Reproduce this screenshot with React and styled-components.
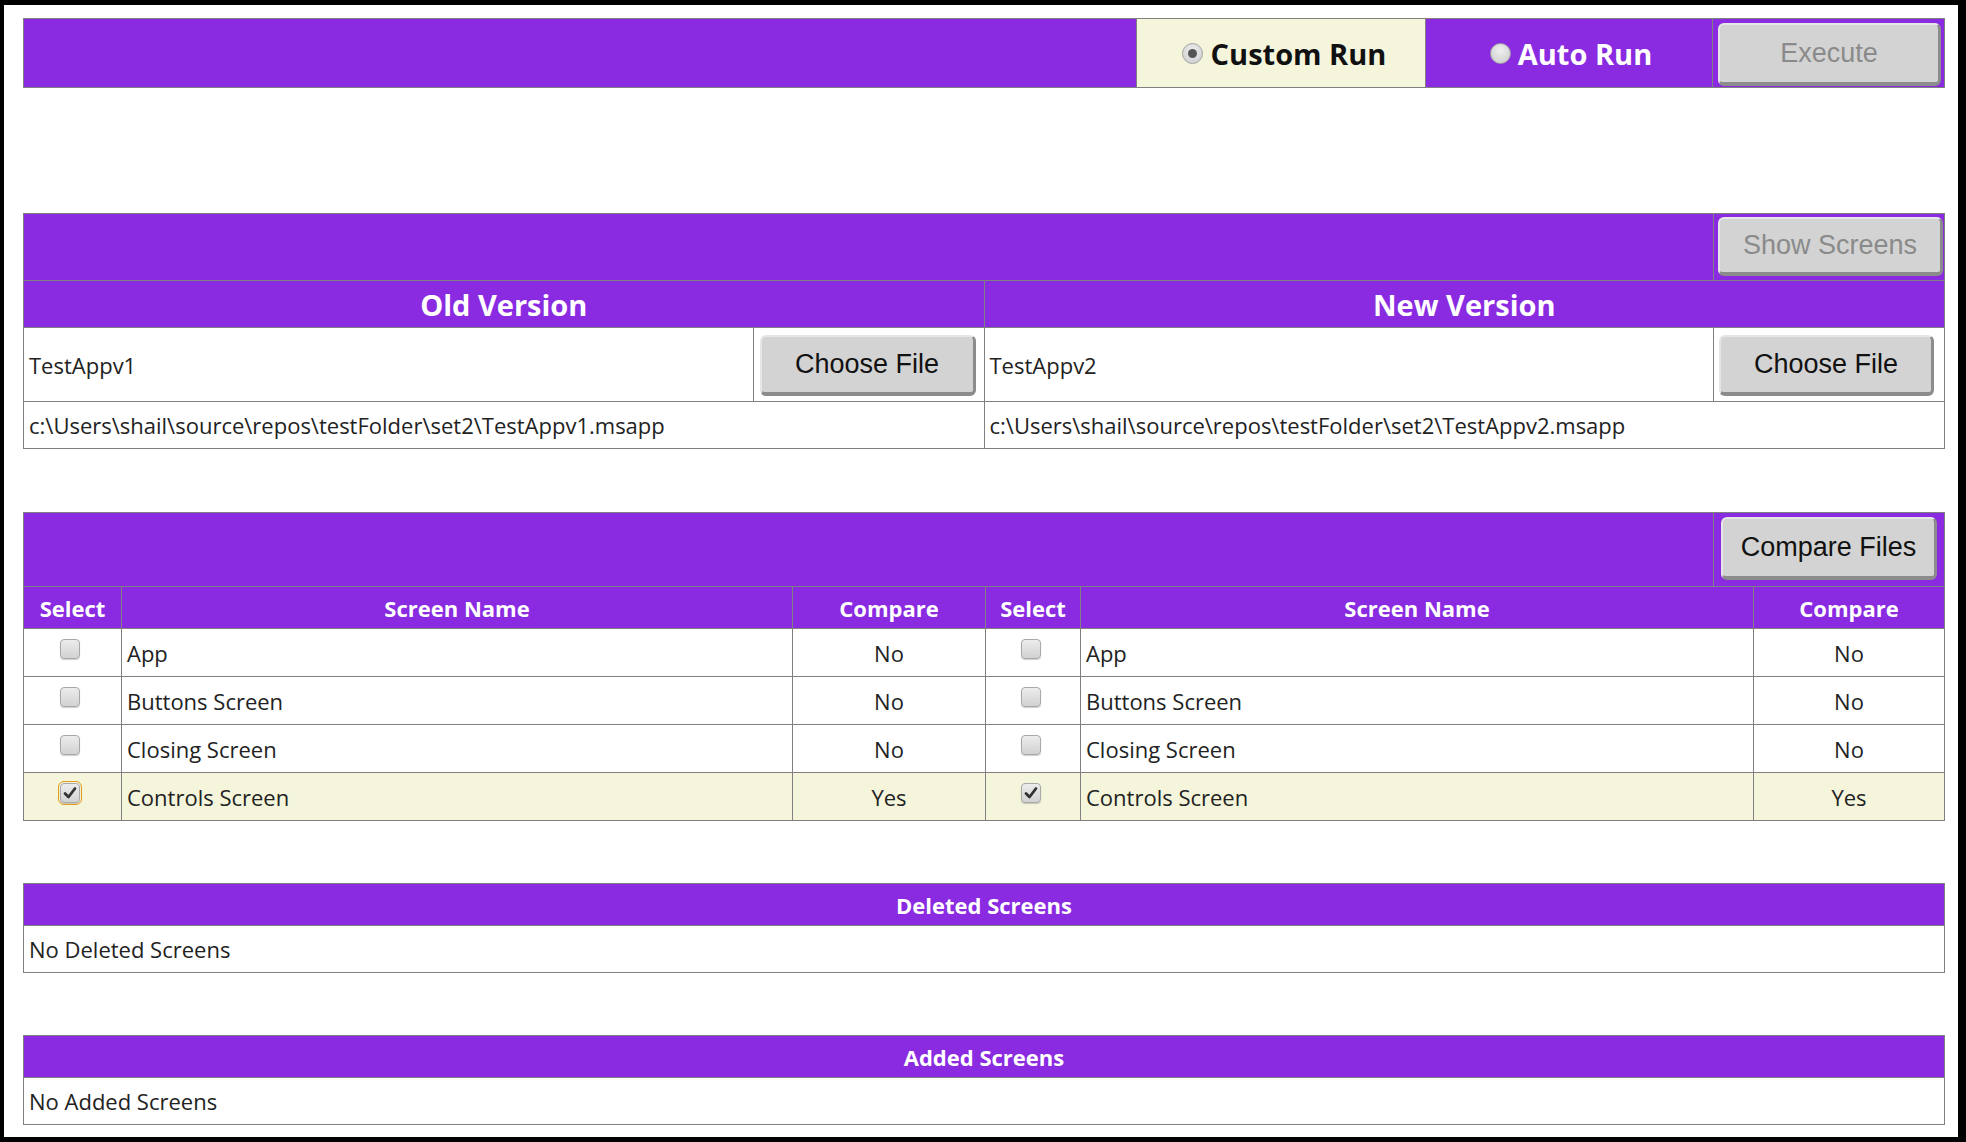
import React, { useState } from 'react';
import styled, { createGlobalStyle } from 'styled-components';

const purple = '#8a2be2';
const line = '#808080';
const beige = '#f5f5dc';

const GlobalStyle = createGlobalStyle`
  html, body {
    margin: 0;
    padding: 0;
    background: #fff;
  }
  * {
    box-sizing: border-box;
  }
`;

const Frame = styled.div`
  width: 1966px;
  height: 1142px;
  border-style: solid;
  border-color: #000;
  border-width: 5px 8px 5px 4px;
  padding: 13px 13px 0 19px;
  font-family: "Open Sans", "Noto Sans", sans-serif;
  color: #222;
  overflow: hidden;
`;

const Panel = styled.div`
  border: 1px solid ${line};
  margin-top: ${p => p.$gap || 0}px;
`;

const Row = styled.div`
  display: grid;
  grid-template-columns: ${p => p.$cols || '1fr'};
  column-gap: 1px;
  background: ${line};
  height: ${p => p.$h}px;
  & + & {
    box-sizing: content-box;
    border-top: 1px solid ${line};
  }
`;

const Cell = styled.div`
  display: flex;
  align-items: ${p => p.$top ? 'flex-start' : 'center'};
  justify-content: ${p => p.$center ? 'center' : 'flex-start'};
  background: ${p => p.$bg || '#fff'};
  padding: ${p => p.$top ? '10px 5px 0 0' : '0 5px'};
  font-size: 22px;
  min-width: 0;
  white-space: nowrap;
`;

const HeadCell = styled.div`
  display: flex;
  align-items: center;
  justify-content: center;
  background: ${p => p.$bg || purple};
  color: ${p => p.$dark ? '#111' : '#fff'};
  font-weight: 700;
  font-size: ${p => p.$big ? 29 : 22}px;
  gap: ${p => p.$gap || 0}px;
  padding-left: ${p => p.$shift || 0}px;
  white-space: nowrap;
  cursor: ${p => p.onClick ? 'pointer' : 'default'};
`;

const ButtonCell = styled.div`
  display: flex;
  background: ${p => p.$white ? '#fff' : purple};
  padding: ${p => p.$pad};
`;

const Button = styled.button`
  flex: 1;
  font-family: "Liberation Sans", Arial, sans-serif;
  font-size: 27px;
  color: ${p => p.$disabled ? '#8a8a8a' : '#111'};
  background: #d3d3d3;
  border-style: solid;
  border-width: 2px 3px 4px 2px;
  border-color: #e6e6e6 #8c8c8c #8c8c8c #e6e6e6;
  border-radius: 6px;
  padding: 0;
  cursor: pointer;
`;

const Radio = styled.span`
  width: 21px;
  height: 21px;
  border-radius: 50%;
  border: 1px solid #a3a3a3;
  background: radial-gradient(circle at 50% 35%, #f0f0f0, #c9c9c9);
  display: flex;
  align-items: center;
  justify-content: center;
  &::after {
    content: '';
    width: 9px;
    height: 9px;
    border-radius: 50%;
    background: ${p => p.$checked ? '#555' : 'transparent'};
  }
`;

const Box = styled.span`
  width: 20px;
  height: 20px;
  border-radius: 4px;
  border: 1px solid #a8a8a8;
  background: linear-gradient(#ececec, #d2d2d2);
  box-shadow: 0 1px 1px rgba(0, 0, 0, 0.2);
  display: flex;
  align-items: center;
  justify-content: center;
  outline: ${p => p.$focus ? '1px solid #e39b1b' : 'none'};
  outline-offset: 1px;
  cursor: pointer;
`;

const Check = ({ checked, focus, onClick }) => (
  <Box $focus={focus} onClick={onClick}>
    {checked &&
      <svg width="14" height="14" viewBox="0 0 14 14">
        <path d="M2 7.5 L5.5 11 L12 2.5" fill="none" stroke="#333" strokeWidth="2.8" strokeLinecap="round" strokeLinejoin="round" />
      </svg>}
  </Box>
);

const screens = [
  { name: 'App', compare: 'No' },
  { name: 'Buttons Screen', compare: 'No' },
  { name: 'Closing Screen', compare: 'No' },
  { name: 'Controls Screen', compare: 'Yes' },
];

const tableCols = '97px 670px 192px 94px 672px 1fr';

function App() {
  const [mode, setMode] = useState('custom');
  const [picked, setPicked] = useState([false, false, false, true]);

  const toggle = idx => {
    setPicked(picked.map((v, i) => i === idx ? !v : v));
  };

  return (
    <Frame>
      <GlobalStyle />
      <Panel>
        <Row $h={68} $cols="1fr 288px 286px 231px">
          <HeadCell />
          <HeadCell $big $gap={8} $shift={6} $bg={mode === 'custom' ? beige : purple} $dark={mode === 'custom'}
            onClick={() => setMode('custom')}>
            <Radio $checked={mode === 'custom'} />Custom Run
          </HeadCell>
          <HeadCell $big $gap={7} $shift={4} $bg={mode === 'auto' ? beige : purple} $dark={mode === 'auto'}
            onClick={() => setMode('auto')}>
            <Radio $checked={mode === 'auto'} />Auto Run
          </HeadCell>
          <ButtonCell $pad="4px 3px 1px 5px">
            <Button $disabled>Execute</Button>
          </ButtonCell>
        </Row>
      </Panel>

      <Panel $gap={125}>
        <Row $h={66} $cols="1fr 230px">
          <HeadCell />
          <ButtonCell $pad="3px 1px 4px 4px">
            <Button $disabled>Show Screens</Button>
          </ButtonCell>
        </Row>
        <Row $h={46} $cols="1fr 1fr">
          <HeadCell $big>Old Version</HeadCell>
          <HeadCell $big>New Version</HeadCell>
        </Row>
        <Row $h={73} $cols="1fr 230px 1fr 230px">
          <Cell>TestAppv1</Cell>
          <ButtonCell $white $pad="7px 8px 5px 6px">
            <Button>Choose File</Button>
          </ButtonCell>
          <Cell>TestAppv2</Cell>
          <ButtonCell $white $pad="7px 10px 5px 5px">
            <Button>Choose File</Button>
          </ButtonCell>
        </Row>
        <Row $h={46} $cols="1fr 1fr">
          <Cell>c:\Users\shail\source\repos\testFolder\set2\TestAppv1.msapp</Cell>
          <Cell>c:\Users\shail\source\repos\testFolder\set2\TestAppv2.msapp</Cell>
        </Row>
      </Panel>

      <Panel $gap={63}>
        <Row $h={73} $cols="1fr 230px">
          <HeadCell />
          <ButtonCell $pad="4px 7px 6px 7px">
            <Button>Compare Files</Button>
          </ButtonCell>
        </Row>
        <Row $h={41} $cols={tableCols}>
          <HeadCell>Select</HeadCell>
          <HeadCell>Screen Name</HeadCell>
          <HeadCell>Compare</HeadCell>
          <HeadCell>Select</HeadCell>
          <HeadCell>Screen Name</HeadCell>
          <HeadCell>Compare</HeadCell>
        </Row>
        {screens.map((s, idx) => {
          const bg = picked[idx] ? beige : '#fff';
          return (
            <Row key={idx} $h={47} $cols={tableCols}>
              <Cell $top $center $bg={bg}>
                <Check checked={picked[idx]} focus={picked[idx]} onClick={() => toggle(idx)} />
              </Cell>
              <Cell $bg={bg}>{s.name}</Cell>
              <Cell $center $bg={bg}>{s.compare}</Cell>
              <Cell $top $center $bg={bg}>
                <Check checked={picked[idx]} onClick={() => toggle(idx)} />
              </Cell>
              <Cell $bg={bg}>{s.name}</Cell>
              <Cell $center $bg={bg}>{s.compare}</Cell>
            </Row>
          );
        })}
      </Panel>

      <Panel $gap={62}>
        <Row $h={41}>
          <HeadCell>Deleted Screens</HeadCell>
        </Row>
        <Row $h={46}>
          <Cell>No Deleted Screens</Cell>
        </Row>
      </Panel>

      <Panel $gap={62}>
        <Row $h={41}>
          <HeadCell>Added Screens</HeadCell>
        </Row>
        <Row $h={46}>
          <Cell>No Added Screens</Cell>
        </Row>
      </Panel>
    </Frame>
  );
}

export default App;
